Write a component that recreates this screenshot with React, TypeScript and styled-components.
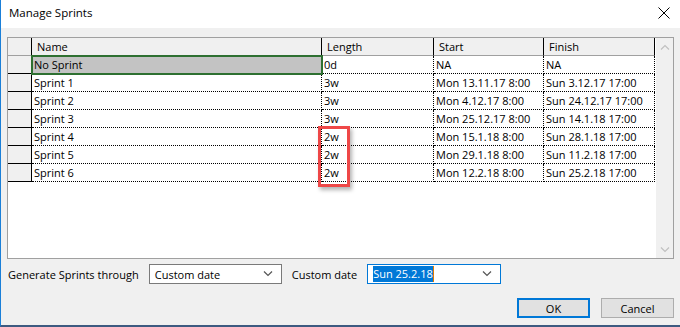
import styled, { createGlobalStyle } from "styled-components";

const GlobalStyle = createGlobalStyle`
  html, body {
    margin: 0;
    padding: 0;
    background: #f0f0f0;
  }
  body {
    font-family: "Open Sans", "Noto Sans", sans-serif;
    font-size: 11px;
    color: #000;
  }
`;

const sprints = [
  { name: "No Sprint", length: "0d", start: "NA", finish: "NA", selected: true },
  { name: "Sprint 1", length: "3w", start: "Mon 13.11.17 8:00", finish: "Sun 3.12.17 17:00" },
  { name: "Sprint 2", length: "3w", start: "Mon 4.12.17 8:00", finish: "Sun 24.12.17 17:00" },
  { name: "Sprint 3", length: "3w", start: "Mon 25.12.17 8:00", finish: "Sun 14.1.18 17:00" },
  { name: "Sprint 4", length: "2w", start: "Mon 15.1.18 8:00", finish: "Sun 28.1.18 17:00" },
  { name: "Sprint 5", length: "2w", start: "Mon 29.1.18 8:00", finish: "Sun 11.2.18 17:00" },
  { name: "Sprint 6", length: "2w", start: "Mon 12.2.18 8:00", finish: "Sun 25.2.18 17:00" },
];

const Chevron = ({ up = false, color = "#555" }: { up?: boolean; color?: string }) => (
  <svg width="10" height="6" viewBox="0 0 10 6">
    <path
      d={up ? "M1 5.5 L5 1.5 L9 5.5" : "M1 0.5 L5 4.5 L9 0.5"}
      fill="none"
      stroke={color}
      strokeWidth="1.2"
    />
  </svg>
);

const App = () => {
  return (
    <>
      <GlobalStyle />
      <Dialog>
        <TitleBar>
          <Title>Manage Sprints</Title>
          <CloseButton>
            <svg width="12" height="12" viewBox="0 0 12 12">
              <path d="M0.5 0.5 L11.5 11.5 M11.5 0.5 L0.5 11.5" stroke="#000" strokeWidth="1" />
            </svg>
          </CloseButton>
        </TitleBar>

        <Body>
          <GridBox>
            <TableArea>
              <Row>
                <SelectorHead />
                <HeadCell $w={290}>Name</HeadCell>
                <HeadCell $w={112}>Length</HeadCell>
                <HeadCell $w={110}>Start</HeadCell>
                <HeadCell $w={111}>Finish</HeadCell>
              </Row>
              {sprints.map((s) => (
                <Row key={s.name}>
                  <Selector />
                  <Cell $w={290} $selected={s.selected}>{s.name}</Cell>
                  <Cell $w={112}>{s.length}</Cell>
                  <Cell $w={110}>{s.start}</Cell>
                  <Cell $w={111}>{s.finish}</Cell>
                </Row>
              ))}
              <Highlight />
            </TableArea>
            <ScrollBar>
              <ScrollArrow>
                <Chevron up color="#c0c0c0" />
              </ScrollArrow>
              <ScrollArrow>
                <Chevron color="#c0c0c0" />
              </ScrollArrow>
            </ScrollBar>
          </GridBox>

          <Controls>
            <Label>Generate Sprints through</Label>
            <Combo $w={133}>
              <span>Custom date</span>
              <Chevron />
            </Combo>
            <Label>Custom date</Label>
            <Combo $w={134} $focused>
              <SelectedText>Sun 25.2.18</SelectedText>
              <Chevron />
            </Combo>
          </Controls>

          <Buttons>
            <Button $default>OK</Button>
            <Button>Cancel</Button>
          </Buttons>
        </Body>
      </Dialog>
    </>
  );
};

export default App;

const Dialog = styled.div`
  width: 680px;
  height: 327px;
  box-sizing: border-box;
  background: #f0f0f0;
  border-left: 1px solid #1a7fd8;
  border-bottom: 2px solid #3d5a80;
  display: flex;
  flex-direction: column;
`;

const TitleBar = styled.div`
  height: 28px;
  background: #fff;
  display: flex;
  align-items: center;
  justify-content: space-between;
  padding: 0 10px 0 8px;
  flex-shrink: 0;
`;

const Title = styled.div`
  font-size: 11.5px;
  color: #000;
  margin-top: -3px;
`;

const CloseButton = styled.div`
  display: flex;
  align-items: center;
  margin-top: -3px;
`;

const Body = styled.div`
  padding: 9px 6px 0 6px;
  display: flex;
  flex-direction: column;
`;

const GridBox = styled.div`
  height: 222px;
  box-sizing: border-box;
  border: 1px solid #a0a0a0;
  background: #fff;
  display: flex;
`;

const TableArea = styled.div`
  position: relative;
  flex: 1;
  display: flex;
  flex-direction: column;
`;

const Row = styled.div`
  display: flex;
  height: 18px;
`;

const SelectorHead = styled.div`
  width: 24px;
  box-sizing: border-box;
  background: #f0f0f0;
  border-right: 1px solid #000;
  border-bottom: 1px solid #a0a0a0;
`;

const Selector = styled.div`
  width: 24px;
  box-sizing: border-box;
  background: #f0f0f0;
  border-right: 1px solid #000;
  border-bottom: 1px solid #000;
`;

const HeadCell = styled.div<{ $w: number }>`
  width: ${(p) => p.$w}px;
  box-sizing: border-box;
  background: #f0f0f0;
  border-right: 1px solid #000;
  border-bottom: 1px solid #a0a0a0;
  padding-left: 5px;
  line-height: 18px;
  white-space: nowrap;
`;

const Cell = styled.div<{ $w: number; $selected?: boolean }>`
  position: relative;
  width: ${(p) => p.$w}px;
  box-sizing: border-box;
  border-right: 1px dotted #000;
  border-bottom: 1px dotted #000;
  padding-left: 2px;
  line-height: 17px;
  white-space: nowrap;
  background: ${(p) => (p.$selected ? "#c3c3c3" : "#fff")};
  ${(p) =>
    p.$selected &&
    `
    outline: 2px solid #2e7031;
    outline-offset: -1px;
    z-index: 1;
  `}
`;

const Highlight = styled.div`
  position: absolute;
  left: 310px;
  top: 88px;
  width: 26px;
  height: 55px;
  border: 3px solid #ef4747;
  box-shadow: 2px 3px 4px rgba(0, 0, 0, 0.3);
  z-index: 2;
`;

const ScrollBar = styled.div`
  width: 17px;
  background: #f0f0f0;
  display: flex;
  flex-direction: column;
  justify-content: space-between;
`;

const ScrollArrow = styled.div`
  height: 17px;
  display: flex;
  align-items: center;
  justify-content: center;
`;

const Controls = styled.div`
  display: flex;
  align-items: center;
  margin-top: 5px;
  height: 20px;
  padding-left: 1px;
`;

const Label = styled.div`
  margin-right: 10px;
  white-space: nowrap;
`;

const Combo = styled.div<{ $w: number; $focused?: boolean }>`
  width: ${(p) => p.$w}px;
  height: 20px;
  box-sizing: border-box;
  background: #fff;
  border: 1px solid ${(p) => (p.$focused ? "#0078d7" : "#7a7a7a")};
  display: flex;
  align-items: center;
  justify-content: space-between;
  padding: 0 8px 0 5px;
  margin-right: 10px;
`;

const SelectedText = styled.span`
  background: #0078d7;
  color: #fff;
  border-right: 1px solid #e07b00;
  line-height: 16px;
`;

const Buttons = styled.div`
  display: flex;
  justify-content: flex-end;
  gap: 11px;
  margin-top: 14px;
`;

const Button = styled.div<{ $default?: boolean }>`
  width: 73px;
  height: 20px;
  box-sizing: border-box;
  background: #e1e1e1;
  border: ${(p) => (p.$default ? "2px solid #0078d7" : "1px solid #adadad")};
  display: flex;
  align-items: center;
  justify-content: center;
`;
